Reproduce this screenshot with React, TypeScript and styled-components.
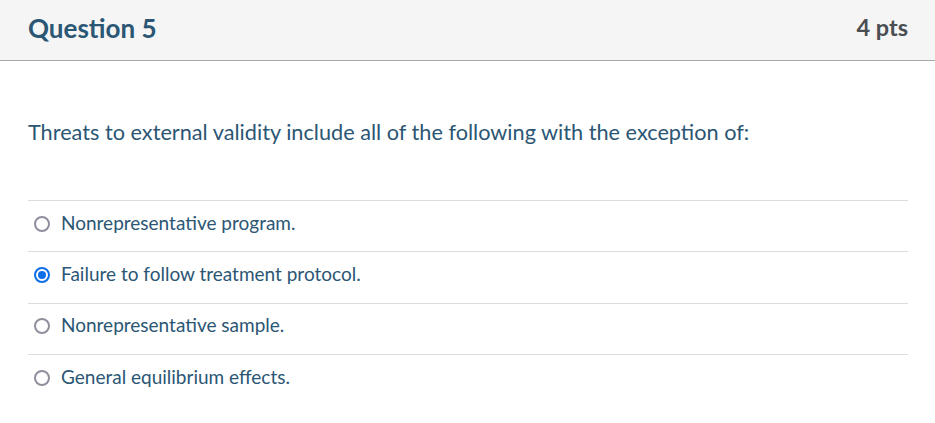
import React from "react";
import styled, { createGlobalStyle } from "styled-components";

const Global = createGlobalStyle`
  html, body { margin: 0; padding: 0; background: #ffffff; }
  body { font-family: Lato, "Liberation Sans", sans-serif; }
`;

const Card = styled.div`
  width: 935px;
  height: 423px;
  background: #ffffff;
  overflow: hidden;
`;

const Header = styled.div`
  height: 60px;
  background: #f5f5f5;
  border-bottom: 1px solid #a9a9a9;
  display: flex;
  align-items: center;
  justify-content: space-between;
  padding: 0 27px 0 28px;
`;

const Title = styled.h2`
  margin: 0;
  font-family: Lato, "Liberation Sans", sans-serif;
  font-weight: 700;
  font-size: 26px;
  color: #2b5674;
  line-height: 1;
  padding-bottom: 5px;
`;

const Points = styled.div`
  font-family: Lato, "Liberation Sans", sans-serif;
  font-weight: 700;
  font-size: 23.5px;
  color: #4a4d52;
  line-height: 1;
  padding-bottom: 5px;
`;

const Body = styled.div`
  padding: 57px 27px 0 28px;
`;

const QuestionText = styled.p`
  margin: 0;
  font-size: 21.7px;
  line-height: 28px;
  color: #2b5674;
`;

const Answers = styled.div`
  margin-top: 54px;
  display: flex;
  flex-direction: column;
`;

const Row = styled.label<{ $first?: boolean }>`
  display: flex;
  align-items: center;
  gap: 11px;
  border-top: 1px solid #dcdcdc;
  padding-left: 6px;
  padding-bottom: 7px;
  box-sizing: border-box;
  height: 51.4px;
`;

const Radio = styled.span<{ $checked: boolean }>`
  width: 16px;
  height: 16px;
  box-sizing: border-box;
  border-radius: 50%;
  border: 2px solid ${(p) => (p.$checked ? "#0b6fe8" : "#8f8f9d")};
  display: flex;
  align-items: center;
  justify-content: center;
  flex: none;
  margin-top: 2px;
  &::after {
    content: "";
    display: ${(p) => (p.$checked ? "block" : "none")};
    width: 8px;
    height: 8px;
    border-radius: 50%;
    background: #0b6fe8;
  }
`;

const AnswerText = styled.span`
  font-size: 19px;
  color: #2b5674;
  line-height: 22px;
`;

const answers = [
  { text: "Nonrepresentative program.", checked: false },
  { text: "Failure to follow treatment protocol.", checked: true },
  { text: "Nonrepresentative sample.", checked: false },
  { text: "General equilibrium effects.", checked: false },
];

export default function App() {
  return (
    <Card>
      <Global />
      <Header>
        <Title>Question 5</Title>
        <Points>4 pts</Points>
      </Header>
      <Body>
        <QuestionText>
          Threats to external validity include all of the following with the exception of:
        </QuestionText>
        <Answers>
          {answers.map((a) => (
            <Row key={a.text}>
              <Radio $checked={a.checked} />
              <AnswerText>{a.text}</AnswerText>
            </Row>
          ))}
        </Answers>
      </Body>
    </Card>
  );
}
